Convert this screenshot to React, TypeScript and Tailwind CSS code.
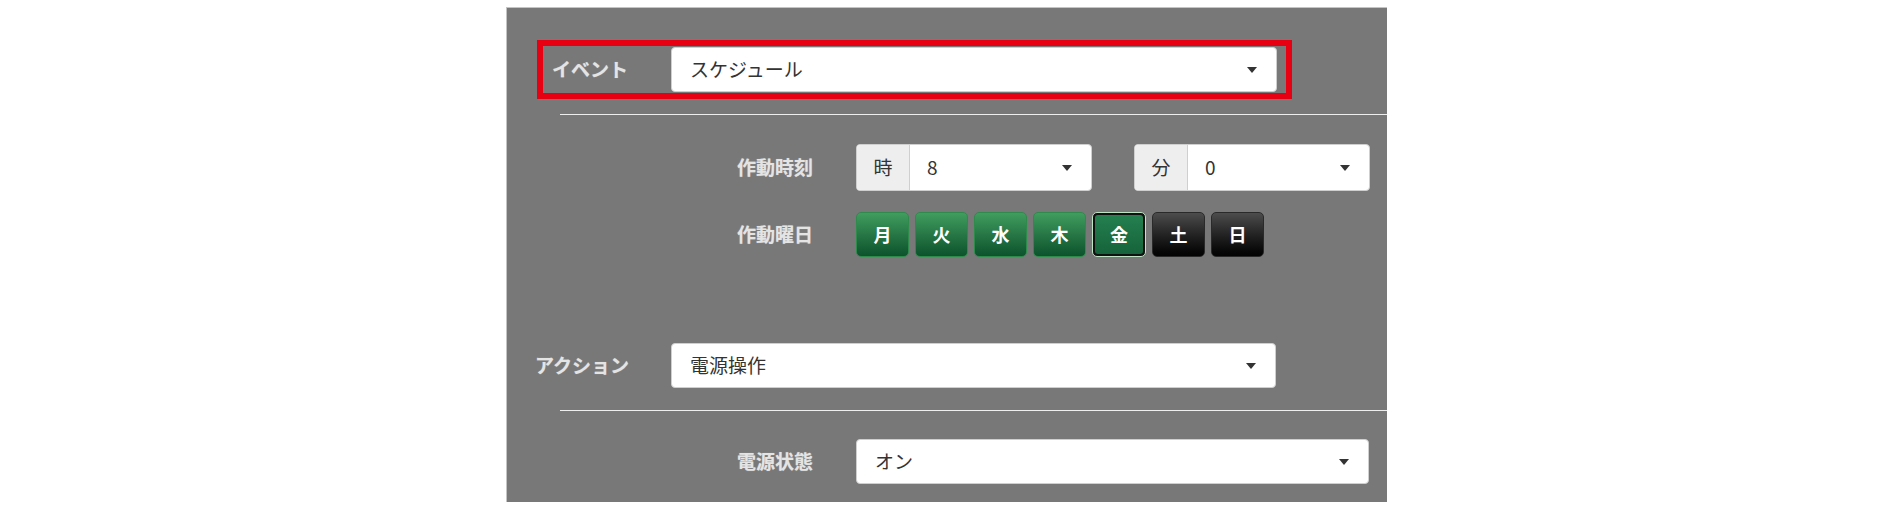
import React from "react";

const font = { fontFamily: '"Noto Sans CJK JP", "Noto Sans", sans-serif' };

function Caret() {
  return (
    <svg width="10" height="6" viewBox="0 0 10 6" className="shrink-0">
      <path d="M0 0 L10 0 L5 6 Z" fill="#333" />
    </svg>
  );
}

function Select({ value, className = "" }: { value: string; className?: string }) {
  return (
    <div
      className={`flex items-center justify-between rounded-[4px] border border-[#cfcfcf] bg-white pl-[18px] pr-[19px] text-[19px] text-[#333] ${className}`}
    >
      <span>{value}</span>
      <Caret />
    </div>
  );
}

function AddonSelect({ addon, value }: { addon: string; value: string }) {
  return (
    <div className="flex h-[47px] w-[236px] overflow-hidden rounded-[4px] border border-[#cfcfcf] bg-white text-[19px] text-[#333]">
      <div className="flex w-[53px] items-center justify-center border-r border-[#cfcfcf] bg-[#eeeeee]">{addon}</div>
      <div className="flex flex-1 items-center justify-between pl-[17px] pr-[19px]">
        <span>{value}</span>
        <Caret />
      </div>
    </div>
  );
}

const days = [
  { d: "月", kind: "on" },
  { d: "火", kind: "on" },
  { d: "水", kind: "on" },
  { d: "木", kind: "on" },
  { d: "金", kind: "sel" },
  { d: "土", kind: "off" },
  { d: "日", kind: "off" },
];

function DayButton({ d, kind }: { d: string; kind: string }) {
  if (kind === "sel") {
    return (
      <div className="flex h-[45px] w-[54px] items-center justify-center rounded-[5px] border border-[#bfe3c5] bg-[#111] p-[2px]">
        <div className="flex h-full w-full items-center justify-center rounded-[3px] bg-gradient-to-b from-[#24804f] to-[#16633b] text-[18px] font-bold text-white">
          {d}
        </div>
      </div>
    );
  }
  const cls =
    kind === "on"
      ? "border-[#2f8b4c] bg-gradient-to-b from-[#409d5f] to-[#0c532d]"
      : "border-[#2a2a2a] bg-gradient-to-b from-[#4d4d4d] to-[#030303]";
  return (
    <div className={`flex h-[45px] w-[53px] items-center justify-center rounded-[5px] border text-[18px] font-bold text-white ${cls}`}>
      {d}
    </div>
  );
}

const label = "text-[19px] font-bold text-[#e4e4e4] [text-shadow:0_0_1px_rgba(255,255,255,0.4)]";

export default function App() {
  return (
    <div className="h-[513px] bg-white pl-[506px] pt-[7px]" style={font}>
      <div className="h-[495px] w-[881px] border-l border-t border-[#c4c4c4] bg-[#787878] pl-[30px] pt-[32px]">
        {/* event */}
        <div className="flex h-[59px] w-[755px] items-center border-[6px] border-[#e60012] pr-[9px]">
          <div className={`w-[128px] pl-[9px] ${label}`}>イベント</div>
          <Select value="スケジュール" className="h-[45px] w-[606px]" />
        </div>
        <div className="ml-[23px] mt-[15px] h-px bg-[#eeeeee]" />

        <div className="mt-[29px] flex items-center">
          <div className={`w-[276px] text-right ${label}`}>作動時刻</div>
          <div className="ml-[43px] flex gap-[42px]">
            <AddonSelect addon="時" value="8" />
            <AddonSelect addon="分" value="0" />
          </div>
        </div>
        <div className="mt-[21px] flex items-center">
          <div className={`w-[276px] text-right ${label}`}>作動曜日</div>
          <div className="ml-[43px] flex gap-[6px]">
            {days.map((x) => (
              <DayButton key={x.d} d={x.d} kind={x.kind} />
            ))}
          </div>
        </div>

        {/* action */}
        <div className="mt-[86px] flex items-center">
          <div className={`w-[134px] -ml-[2px] pl-0 ${label}`}>アクション</div>
          <Select value="電源操作" className="ml-[2px] h-[45px] w-[605px]" />
        </div>
        <div className="ml-[23px] mt-[22px] h-px bg-[#eeeeee]" />

        <div className="mt-[28px] flex items-center">
          <div className={`w-[276px] text-right ${label}`}>電源状態</div>
          <Select value="オン" className="ml-[43px] h-[45px] w-[513px]" />
        </div>
      </div>
    </div>
  );
}
